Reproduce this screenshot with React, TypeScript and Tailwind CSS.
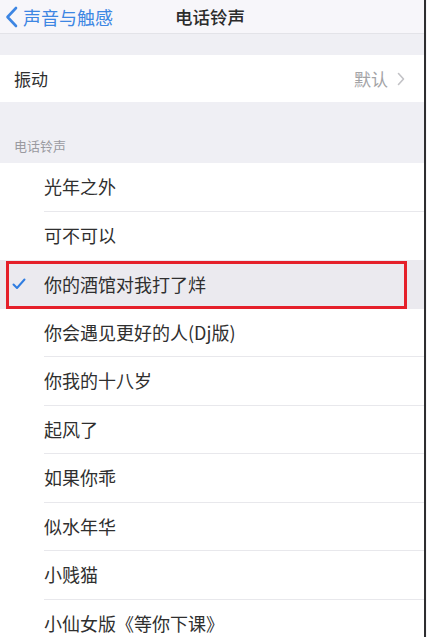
import React from "react";

const songs = [
  "光年之外",
  "可不可以",
  "你的酒馆对我打了烊",
  "你会遇见更好的人(Dj版)",
  "你我的十八岁",
  "起风了",
  "如果你乖",
  "似水年华",
  "小贱猫",
  "小仙女版《等你下课》",
];

const font = { fontFamily: '"Noto Sans CJK SC", "Noto Sans", sans-serif' };

function Check() {
  return (
    <svg width="14" height="12" viewBox="0 0 14 12" fill="none">
      <path d="M1.5 6.5 L5 10 L12.5 1.5" stroke="#2f7de1" strokeWidth="2" strokeLinecap="round" strokeLinejoin="round" />
    </svg>
  );
}

export default function App() {
  const selected = 2;
  return (
    <div className="flex w-[427px] h-[637px] overflow-hidden bg-[#f6f6f8]" style={font}>
      <div className="w-[424px] flex flex-col bg-[#efeff4]">
        {/* nav bar */}
        <header className="h-[34px] shrink-0 flex items-center bg-[#f7f6fa] border-b border-[#e3e3e8] relative">
          <div className="flex items-center pl-[5px] text-[#3d86e3] text-[18px] leading-none">
            <svg width="13" height="22" viewBox="0 0 13 22" fill="none">
              <path d="M11 2 L2.5 11 L11 20" stroke="#3d86e3" strokeWidth="2.6" strokeLinecap="round" strokeLinejoin="round" />
            </svg>
            <span className="ml-[5px]">声音与触感</span>
          </div>
          <div className="absolute left-[175px] text-[17.5px] leading-none text-[#2b2b2b] font-medium">电话铃声</div>
        </header>

        <div className="h-[21px] shrink-0" />

        {/* vibration row */}
        <div className="h-[47px] shrink-0 bg-white flex items-center pl-[14px] pr-[19px]">
          <span className="text-[17px] text-[#2f2f2f]">振动</span>
          <span className="ml-auto text-[17px] text-[#a3a3a6]">默认</span>
          <svg className="ml-[9px]" width="8" height="14" viewBox="0 0 8 14" fill="none">
            <path d="M1.5 1.5 L6.5 7 L1.5 12.5" stroke="#c2c2c6" strokeWidth="1.6" strokeLinecap="round" strokeLinejoin="round" />
          </svg>
        </div>

        {/* section header */}
        <div className="h-[61px] shrink-0 flex items-end pl-[14px] pb-[8px]">
          <span className="text-[13px] text-[#9a9aa0]">电话铃声</span>
        </div>

        {/* ringtone list */}
        <div className="flex flex-col bg-white">
          {songs.map((s, i) => (
            <div
              key={s}
              className={
                i === selected
                  ? "h-[48.5px] shrink-0 flex items-center bg-[#ebeaef] relative"
                  : "h-[48.5px] shrink-0 flex items-center relative"
              }
            >
              <div className="w-[44px] shrink-0 flex justify-center pr-[6px]">
                {i === selected && <Check />}
              </div>
              <div
                className={
                  i === selected || i === selected - 1
                    ? "flex-1 h-full flex items-center"
                    : "flex-1 h-full flex items-center border-b border-[#e8e8ec]"
                }
              >
                <span className="text-[18px] text-[#2f2f2f]">{s}</span>
              </div>
              {i === selected && (
                <div className="absolute left-[6px] top-[1px] w-[401px] h-[48px] border-[3px] border-[#e5202a]" />
              )}
            </div>
          ))}
        </div>
      </div>
      <div className="w-[2px] bg-[#2e2e30]" />
    </div>
  );
}
